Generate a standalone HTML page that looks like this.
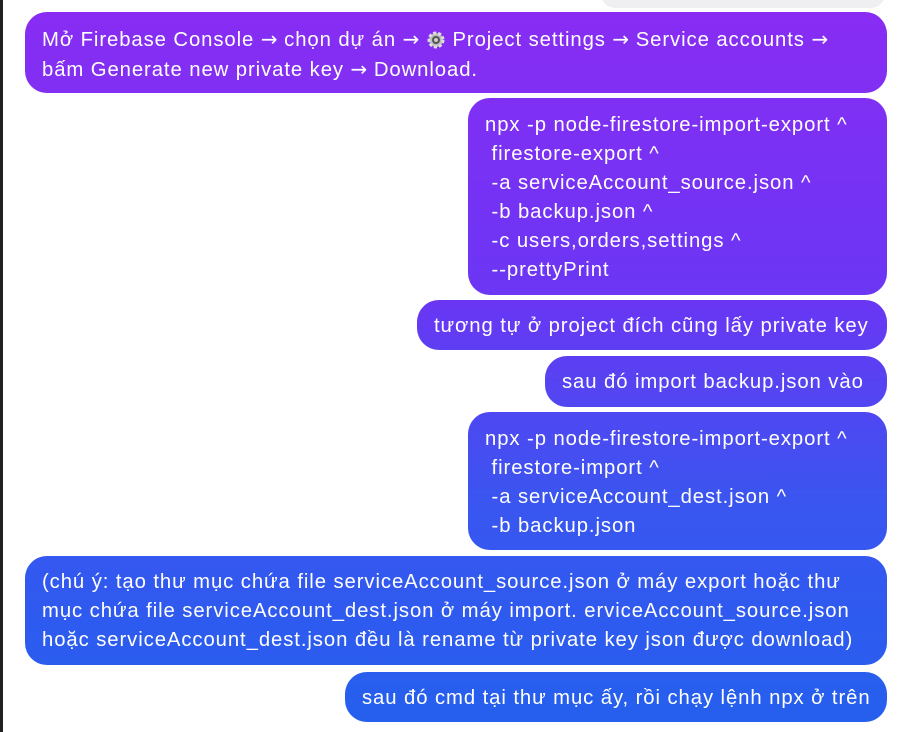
<!DOCTYPE html>
<html><head><meta charset="utf-8">
<style>
html,body{margin:0;padding:0;width:898px;height:732px;overflow:hidden;background:#fff;}
body{position:relative;font-family:"Liberation Sans",sans-serif;}
.edge{position:absolute;left:0;top:0;width:3px;height:732px;background:#222;}
.grey{position:absolute;left:601px;top:-20px;width:284px;height:28px;background:#efeff1;border-radius:14px;}
.b{position:absolute;border-radius:22px;color:#fff;font-size:20.3px;line-height:29px;box-sizing:border-box;white-space:pre;
background:linear-gradient(180deg,#8a2cf3 0px,#6a36f4 300px,#3a55f0 500px,#2460ee 732px);background-attachment:fixed;letter-spacing:0.92px;}
.a{font-family:"DejaVu Sans",sans-serif;font-size:20px;letter-spacing:0;}
</style></head><body>
<div class="edge"></div>
<div class="grey"></div>
<div class="b" style="left:25px;top:12px;width:862px;height:81px;padding:13px 0 0 17px;">Mở Firebase Console <span class="a">→</span> chọn dự án <span class="a">→</span> <svg width="20" height="20" viewBox="0 0 20 20" style="vertical-align:-4px"><circle cx="10" cy="10" r="7" fill="#bbb" stroke="#ddd" stroke-width="3" stroke-dasharray="3 2"/><circle cx="10" cy="10" r="4" fill="#555"/><circle cx="10" cy="10" r="2" fill="#ccc"/></svg> Project settings <span class="a">→</span> Service accounts <span class="a">→</span>
bấm Generate new private key <span class="a">→</span> Download.</div>
<div class="b" style="left:468px;top:98px;width:419px;height:197px;padding:13px 0 0 17px;">npx -p node-firestore-import-export ^
 firestore-export ^
 -a serviceAccount_source.json ^
 -b backup.json ^
 -c users,orders,settings ^
 --prettyPrint</div>
<div class="b" style="left:417px;top:300px;width:470px;height:50px;padding:12px 0 0 17px;">tương tự ở project đích cũng lấy private key</div>
<div class="b" style="left:545px;top:356px;width:342px;height:51px;padding:12px 0 0 17px;">sau đó import backup.json vào</div>
<div class="b" style="left:468px;top:412px;width:419px;height:138px;padding:13px 0 0 17px;">npx -p node-firestore-import-export ^
 firestore-import ^
 -a serviceAccount_dest.json ^
 -b backup.json</div>
<div class="b" style="left:25px;top:556px;width:862px;height:109px;padding:12px 0 0 17px;">(chú ý: tạo thư mục chứa file serviceAccount_source.json ở máy export hoặc thư
mục chứa file serviceAccount_dest.json ở máy import. erviceAccount_source.json
hoặc serviceAccount_dest.json đều là rename từ private key json được download)</div>
<div class="b" style="left:345px;top:672px;width:542px;height:50px;padding:12px 0 0 17px;">sau đó cmd tại thư mục ấy, rồi chạy lệnh npx ở trên</div>
</body></html>
